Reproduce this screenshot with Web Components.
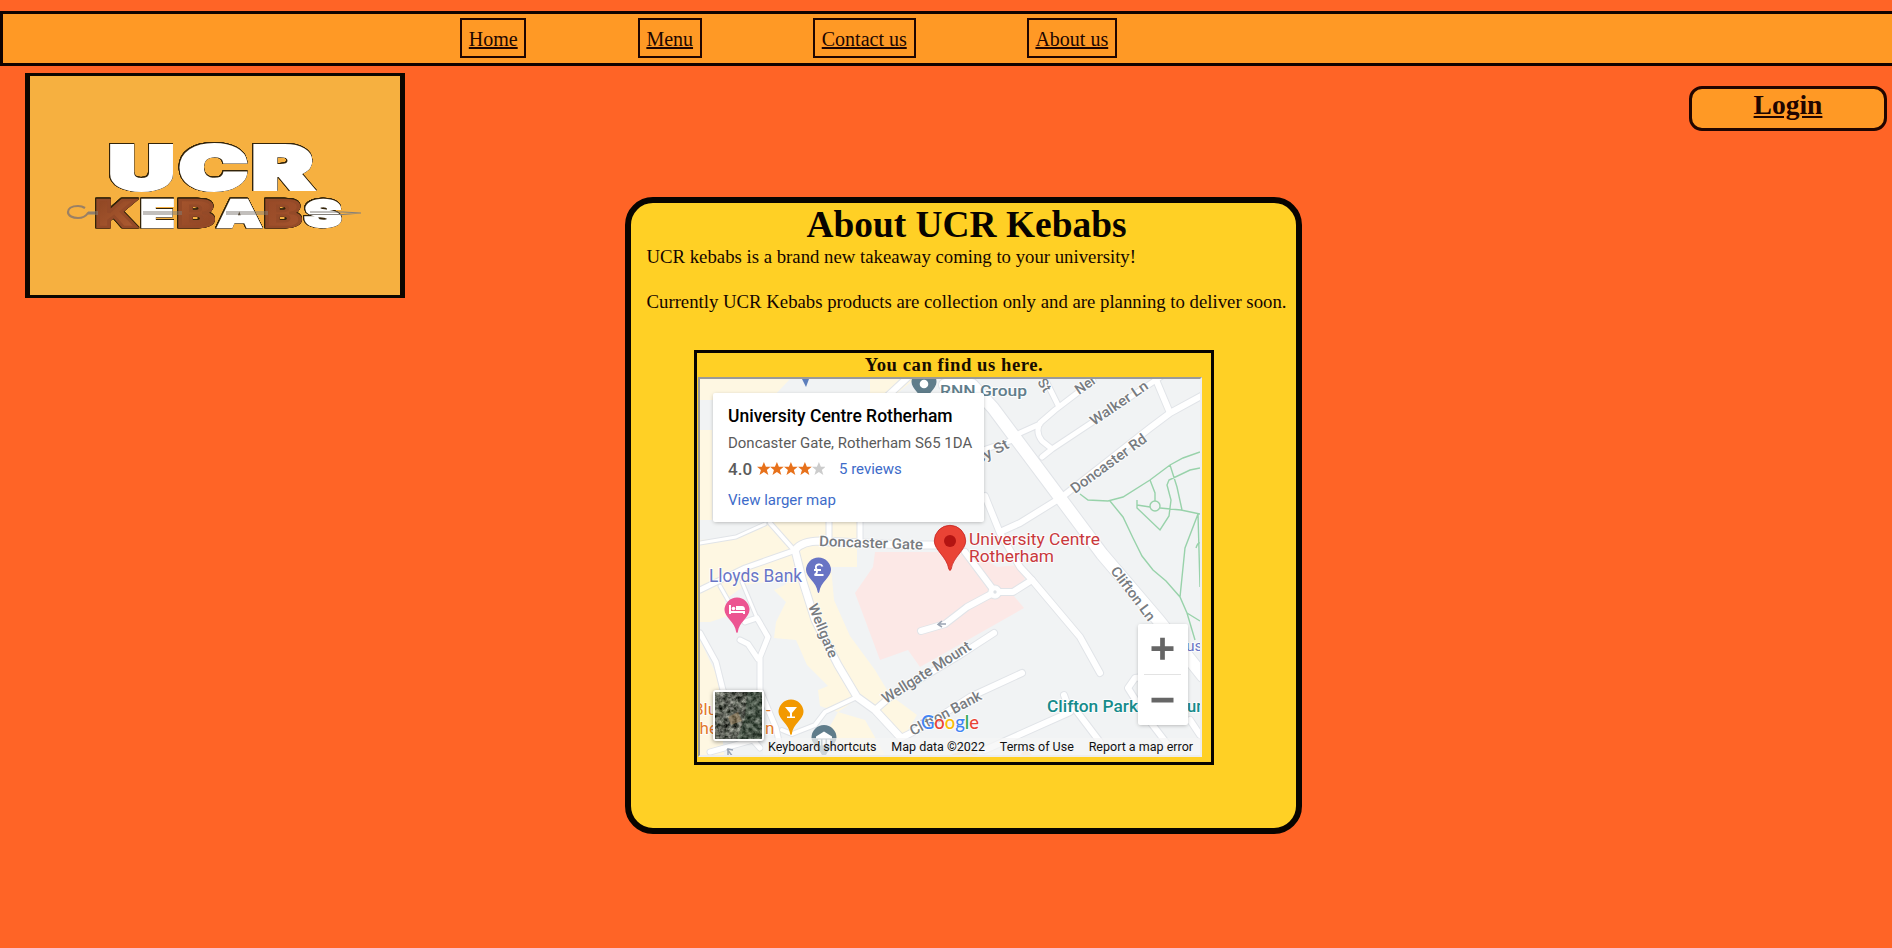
<!DOCTYPE html>
<html lang="en">
<head>
<meta charset="utf-8">
<title>UCR Kebabs - About us</title>
<style>
html,body{margin:0;height:100%;overflow:hidden}
body{background:#ff6426;font-family:"Liberation Serif",serif;color:#140500}
</style>
</head>
<body>
<ucr-page></ucr-page>
<script>
const define=(name,html)=>customElements.define(name,class extends HTMLElement{
  constructor(){super();this.attachShadow({mode:'open'}).innerHTML=typeof html==='function'?html(this):html;}
});

define('nav-link',`<style>
:host{display:block;box-sizing:border-box;height:40px;border:2px solid #200500;padding:8px 6.8px 0}
a{font-size:20px;line-height:23px;color:#200500;text-decoration:underline;white-space:nowrap;display:block}
</style><a><slot></slot></a>`);

define('nav-bar',`<style>
:host{display:flex;box-sizing:border-box;width:1900px;height:55px;border:3px solid #100200;background:#ff9925;gap:111.1px;padding:4px 0 0 457px;align-items:flex-start}
</style><slot></slot>`);

define('kebab-logo',`<style>
:host{display:block;box-sizing:border-box;width:380px;height:225px;border:solid #0c0600;border-width:3px 5px;background:#f6b040}
svg{display:block;width:370px;height:219px}
text{font-family:Inter,sans-serif;font-weight:900;stroke-linejoin:miter}
.u{fill:#fff;stroke:#fff;stroke-width:4px;font-size:59px;letter-spacing:3.500px}
.k{font-size:37px;stroke-width:2.400px;fill:#fff;stroke:#fff;letter-spacing:2px}
.k .w{fill:url(#wood);stroke:#944a28}
.o{filter:drop-shadow(.8px 0 0 #33240a) drop-shadow(-.8px 0 0 #33240a) drop-shadow(0 .7px 0 #33240a) drop-shadow(0 -.7px 0 #33240a)}
</style>
<svg viewBox="30 76 370 219">
<defs><linearGradient id="wood" x1="0" y1="0" x2="1" y2=".25" spreadMethod="reflect"><stop offset="0" stop-color="#8a4321"/><stop offset=".3" stop-color="#a9582f"/><stop offset=".6" stop-color="#934725"/><stop offset="1" stop-color="#a5542e"/></linearGradient></defs>
<g class="o"><text class="u" x="109" y="189" textLength="209" lengthAdjust="spacingAndGlyphs">UCR</text></g>
<path d="M85 208Q82 206 78 206C71 206 68 209 68 212C68 216 73 218 78 218C84 218 86 216 88 213H96" fill="none" stroke="#9a8064" stroke-width="2.2"/>
<g class="o"><text class="k" x="95.500" y="227.300" textLength="249" lengthAdjust="spacingAndGlyphs"><tspan class="w">K</tspan><tspan>E</tspan><tspan class="w">B</tspan><tspan>A</tspan><tspan class="w">B</tspan><tspan>S</tspan></text></g>
<path d="M88 212H98M143 212H182M226 212H268M310 212H343L361 213L343 214.500H310M268 214H226M182 214H143M98 214H88" fill="none" stroke="#85807a" stroke-width="1.200"/>
</svg>`);

define('login-button',`<style>
:host{display:block;box-sizing:border-box;width:198px;height:45px;border:3px solid #200500;border-radius:13px;background:#ff9925;text-align:center}
a{font-size:27.5px;font-weight:bold;line-height:32px;text-decoration:underline;color:#200500}
</style><a><slot></slot></a>`);

define('about-card',`<style>
:host{display:block;box-sizing:border-box;width:677px;height:637px;border:6px solid #080400;border-radius:28px;background:#ffd025}
h1{margin:0 0 0 6px;text-align:center;font-size:37.4px;line-height:42px;color:#080400;padding-top:1px}
.t{padding:0 0 0 15.500px;margin-top:-1px;font-size:18.750px;line-height:23px;white-space:nowrap}
.m{margin:37px 0 0 63px}
</style><h1><slot name="title"></slot></h1><div class="t"><slot></slot></div><div class="m"><slot name="map"></slot></div>`);

define('text-line',`<style>:host{display:block;margin:0 0 22px}</style><slot></slot>`);

define('map-frame',`<style>
:host{display:block;box-sizing:border-box;width:520px;height:415px;border:3px solid #080400}
h2{margin:0;font-size:18.7px;line-height:23.5px;text-align:center;letter-spacing:.53px;color:#180c00}
.f{margin-left:1px;border:2px inset #eee;width:500px;height:376px}
</style><h2><slot></slot></h2><div class="f"><street-map></street-map></div>`);

define('place-card',()=>{
const star=(c)=>`<svg viewBox="0 0 14 14"><path fill="${c}" d="M7 0L9 4.700H14L10 8L11.500 13.200L7 10.200L2.500 13.200L4 8L0 4.700H5Z"/></svg>`;
return `<style>
:host{display:block;box-sizing:border-box;width:271px;height:129px;background:#fff;border-radius:2px;box-shadow:0 1px 4px -1px rgba(0,0,0,.35);padding:12px 15px;font-family:Roboto,sans-serif;white-space:nowrap;color:#5b5b5b}
.n{font-size:17.500px;font-weight:500;color:#000;line-height:22px}
.a{font-size:14.970px;line-height:20px;margin-top:6px}
.r{display:flex;align-items:center;height:20px;margin-top:6px}
.r b{font-weight:500;font-size:17px;width:28.500px}
.s{display:flex;width:82.500px}
svg{width:13.800px;height:13.800px}
.l{color:#3d6bc9;font-size:15px}
.v{margin-top:12px;line-height:18px}
</style>
<div class="n">University Centre Rotherham</div><div class="a">Doncaster Gate, Rotherham S65 1DA</div>
<div class="r"><b>4.0</b><span class="s">${star('#e7711b').repeat(4)+star('#ccc')}</span><span class="l">5 reviews</span></div>
<div class="l v">View larger map</div>`;});

define('zoom-control',`<style>
:host{display:block;width:50px;height:101px;background:#fff;border-radius:2px;box-shadow:0 1px 4px -1px rgba(0,0,0,.35)}
svg{display:block}
</style><svg width="50" height="101"><path d="M13.500 24.700H35.500M24.500 13.700V35.700M13.500 76.200H35.500" stroke="#666" stroke-width="4.700"/><path d="M6 50.500H43" stroke="#e3e3e3"/></svg>`);

define('satellite-toggle',`<style>
:host{display:block;box-sizing:border-box;width:51px;height:51px;border:2px solid #fff;border-radius:3px;box-shadow:0 1px 4px rgba(0,0,0,.4);overflow:hidden;background:#4d534d}
svg{display:block}
</style><svg width="47" height="47"><filter id="n" x="0" y="0" width="1" height="1" color-interpolation-filters="sRGB"><feTurbulence type="fractalNoise" baseFrequency=".22" numOctaves="4" seed="8"/><feColorMatrix values="1 0 0 0 -.13  .98 .03 0 0 -.12  .96 0 0 0 -.13  0 0 0 0 1"/></filter><rect width="47" height="47" filter="url(#n)"/><path d="M32 0H47V47H22L30 25Z" fill="#1e3d27" opacity=".3"/><path d="M13 25L23 20L27 29L16 33Z" fill="#b58e5e" opacity=".4"/></svg>`);

define('street-map',()=>{
const roads=[
['M700 543L736 537L765 524',3],['M720 586L728 600M742 582L757 618',3],
['M700 633L716 662L723 690L735 720L760 748M760 738L710 752',5],['M757 618L768 637L760 657L760 690L776 728L782 755M757 618L745 622M740 640L748 644L758 659',5],
['M829 515V543M860 515V541',5],['M770 523L793 549',4],['M700 590L745 568L796 550',5],
['M950 545L905 545L820 541Q802 541 795 550L803 582L815 620L838 665L857 697L875 710L901 738',7],
['M875 710L890 697L960 655L994 633M901 738L925 726L970 697L1022 673',6],
['M857 697L825 712L815 725L792 734L782 730',4],
['M985 496L1000 533L1020 567L1032 580L1080 637L1100 673',6],['M965 552L995 592L967 607L945 624L921 631M995 592L1013 592L1032 580',6],
['M945 385L972 385L993 408L1058 495L1102 554L1160 622L1203 676',12],['M880 403L908 377',6],
['M1203 395L1170 413L1150 428L1062 497L1020 523L1000 532M1154 375L1170 413',6],
['M1093 381L1055 410L1040 423Q1035 432 1042 441L1052 449L1165 374M1043 375L1058 405M1040 424L1020 433L1013 440L980 451M1052 449L1042 457',5],
['M985 750L1070 712L1064 695M1075 709L1100 742M1160 675L1135 678L1128 688L1145 715L1168 745M1190 720L1200 735',6]];
const draw=(k)=>roads.map(([d,w])=>`<path d="${d}" stroke-width="${w+k}"/>`).join('');
const pin=(x,y,c,i)=>`<g transform="translate(${x} ${y})"><path fill="${c}" d="M-12.500 0A12.500 12.500 0 1 1 12.500 0C12.500 7 2 12 .8 22Q0 24-.8 22C-2 12-12.500 7-12.500 0Z"/>${i}</g>`;
const label=(t,x,y,a,l,s=14)=>`<text transform="translate(${x} ${y}) rotate(${a})" font-size="${s}" ${l?`textLength="${l}" lengthAdjust="spacingAndGlyphs"`:''}>${t}</text>`;
return `<style>
:host{display:block;position:relative;width:500px;height:376px;overflow:hidden;font-family:Roboto,sans-serif}
.map{display:block;width:500px;height:376px}
text{font-weight:500;paint-order:stroke;stroke:#fff;stroke-width:2px;stroke-opacity:.8;stroke-linejoin:round}
.n{fill:#777b80}.b text,.b{font-weight:400}
place-card{position:absolute;left:13px;top:14px}
zoom-control{position:absolute;right:12px;bottom:30px}
satellite-toggle{position:absolute;left:13px;top:311px}
footer{position:absolute;right:0;bottom:0;width:437px;height:17px;box-sizing:border-box;background:rgba(245,245,245,.72);padding:0 7px 0 5px;display:flex;justify-content:space-between;font-size:12.500px;line-height:17px;color:#111;white-space:nowrap}
</style>
<svg class="map" viewBox="700 379 500 376">
<rect x="700" y="379" width="500" height="376" fill="#f1f3f4"/>
<g fill="#fef7e2">
<path d="M700 379H790L770 400H700ZM700 430H712V520H700ZM700 540L735 538L765 524L785 500H857V567H831L834 600L850 636L875 670L890 695L917 715L902 740L860 697L838 712L820 706L818 690L828 686L807 665L796 640L774 638L776 622L786 602L774 590L785 585L790 578L765 582L745 585L725 600L728 616L710 622H700Z"/>
<path d="M700 640L718 678L724 755H700ZM838 712L865 720L885 755H850L825 735ZM870 379H915L895 395H870Z"/></g>
<path fill="#fce8e6" d="M875 552H973L997 567L1018 565L1026 577L1013 595L1024 608L920 667L908 650L880 660L855 593L873 567Z"/>
<g fill="none" stroke="#e1e4e8" stroke-linecap="round" stroke-linejoin="round">${draw(2)}<circle cx="995" cy="592" r="7" fill="#e1e4e8"/></g>
<g fill="none" stroke="#fff" stroke-linecap="round" stroke-linejoin="round">${draw(0)}<circle cx="995" cy="592" r="6" fill="#fff"/></g>
<circle cx="995" cy="592" r="1.700" fill="#dde1e5"/>
<path d="M946 624H938M942 621L938 624.500L942 627M733 757L727 749M728 755V749L733 750" fill="none" stroke="#9aa4b3" stroke-width="1.500"/>
<g fill="none" stroke="#98d2aa" stroke-width="1.400">
<path d="M1080 494L1088 500L1108 501L1123 497L1150 480L1170 465L1183 458L1200 452M1110 501L1123 517L1133 538L1142 556L1153 570L1166 581L1180 597L1187 613L1195 640M1187 613L1200 621M1180 597L1185 548L1198 514L1200 587M1150 480L1155 493V501M1150 507L1137 505M1137 500V508L1160 530L1169 516L1171 500L1167 485L1169 480L1190 470L1200 468M1160 508L1181 510L1200 514M1170 465L1177 487L1182 510M1196 548Q1198 542 1200 543"/><circle cx="1155" cy="506" r="5"/></g>
<g class="n">
${label('Doncaster Gate',819,546,2,104,14.5)}${label('Wellgate',808,606,68,57)}${label('Wellgate Mount',886,704,-32.500,102,15)}${label('Clifton Bank',913,736,-28,79,14.5)}${label('Clifton Ln',1110,571,53,64)}${label('Doncaster Rd',1075,494,-36,90,14.5)}${label('Walker Ln',1094,426,-34.500,67)}${label('Ner',1079,395,-35,0)}${label('St',1037,382,58,0)}${label('cy St',979,464,-28,35,14.5)}
</g>
<g fill="#607d8b">${label('RNN Group',940,396,0,87,15.500)}</g>
<g class="b">
<g fill="#6975c6">${label('Lloyds Bank',709,582,0,93,17.500)}${label('us',1186,651,0,0,15.500)}</g>
<g fill="#e2792c">${label('Blu',693,715,0,0,17)}${label('-',766,716,0,0,17)}${label('the',694,734,0,0,17)}${label('n',765,734,0,0,17)}</g>
<g fill="#c9383c">${label('University Centre',969,545,0,131,17)}${label('Rotherham',969,562,0,85,17)}</g></g>
<g fill="#168b8b">${label('Clifton Park',1047,711.500,0,91,16.500)}${label('um',1187,711.500,0,0,16.500)}</g>
<path d="M802 379H809L806 387Z" fill="#5c7ebc"/>
${pin(924,382,'#607d8b','<circle r="4.300" cy="2" fill="#fff"/>')}
${pin(818.500,570,'#6874c4','<path d="M4-3.500Q3-6 0-5.500Q-3-5-2.500-2L-1.500 1Q-1.500 4-4 5H5M-4.500 0H2.500" fill="none" stroke="#fff" stroke-width="1.900"/>')}
${pin(737,610,'#ec5591','<path d="M-8-5H-6V1H8V4H6V3H-6V4H-8ZM-1-4H5Q8-4 8 0H-1Z" fill="#fff"/><circle cx="-3.500" cy="-1.500" r="1.800" fill="#fff"/>')}
${pin(791,712,'#f29900','<path d="M-6-5H6L1 1V4.500H4V6H-4V4.500H-1V1Z" fill="#fff"/>')}
${pin(824,737.500,'#607d8b','<path d="M-8-1L0-6L8-1V1H-8ZM-6 2H-3V8H-6ZM-1.500 2H1.500V8H-1.500ZM3 2H6V8H3Z" fill="#fff"/>')}
<path fill="#ea4335" stroke="#c5221f" stroke-width=".8" d="M934.300 541A15.700 15.700 0 1 1 965.700 541C965.700 550 953 557 951.200 569Q950 572 948.800 569C947 557 934.300 550 934.300 541Z"/><circle cx="950" cy="541" r="6" fill="#b31412"/>
<path d="M951 755Q963 748 979 755ZM1020 755Q1026 747 1032 755Z" fill="#fbd9b4"/>
<text x="921" y="729" textLength="58" lengthAdjust="spacingAndGlyphs" style="font-family:Lato,sans-serif;font-size:20px;font-weight:500;stroke-opacity:.7"><tspan fill="#4285f4">G</tspan><tspan fill="#ea4335">o</tspan><tspan fill="#fbbc04">o</tspan><tspan fill="#4285f4">g</tspan><tspan fill="#34a853">l</tspan><tspan fill="#ea4335">e</tspan></text>
</svg>
<footer><span>Keyboard shortcuts</span><span>Map data ©2022</span><span>Terms of Use</span><span>Report a map error</span></footer>
<place-card></place-card><zoom-control></zoom-control><satellite-toggle></satellite-toggle>`;});

define('ucr-page',`<style>
:host{display:block;width:1892px;height:948px;overflow:hidden;box-sizing:border-box;padding-top:11px}
main{display:grid;grid-template-columns:600px 1fr 198px;padding:0 5px 0 25px;align-items:start}
kebab-logo{margin-top:7px}
about-card{margin-top:131px}
login-button{margin-top:20px}
</style>
<nav-bar><nav-link>Home</nav-link><nav-link>Menu</nav-link><nav-link>Contact us</nav-link><nav-link>About us</nav-link></nav-bar>
<main><kebab-logo></kebab-logo>
<about-card><span slot="title">About UCR Kebabs</span>
<text-line>UCR kebabs is a brand new takeaway coming to your university!</text-line>
<text-line>Currently UCR Kebabs products are collection only and are planning to deliver soon.</text-line>
<map-frame slot="map">You can find us here.</map-frame></about-card>
<login-button>Login</login-button></main>`);
</script>
</body>
</html>
